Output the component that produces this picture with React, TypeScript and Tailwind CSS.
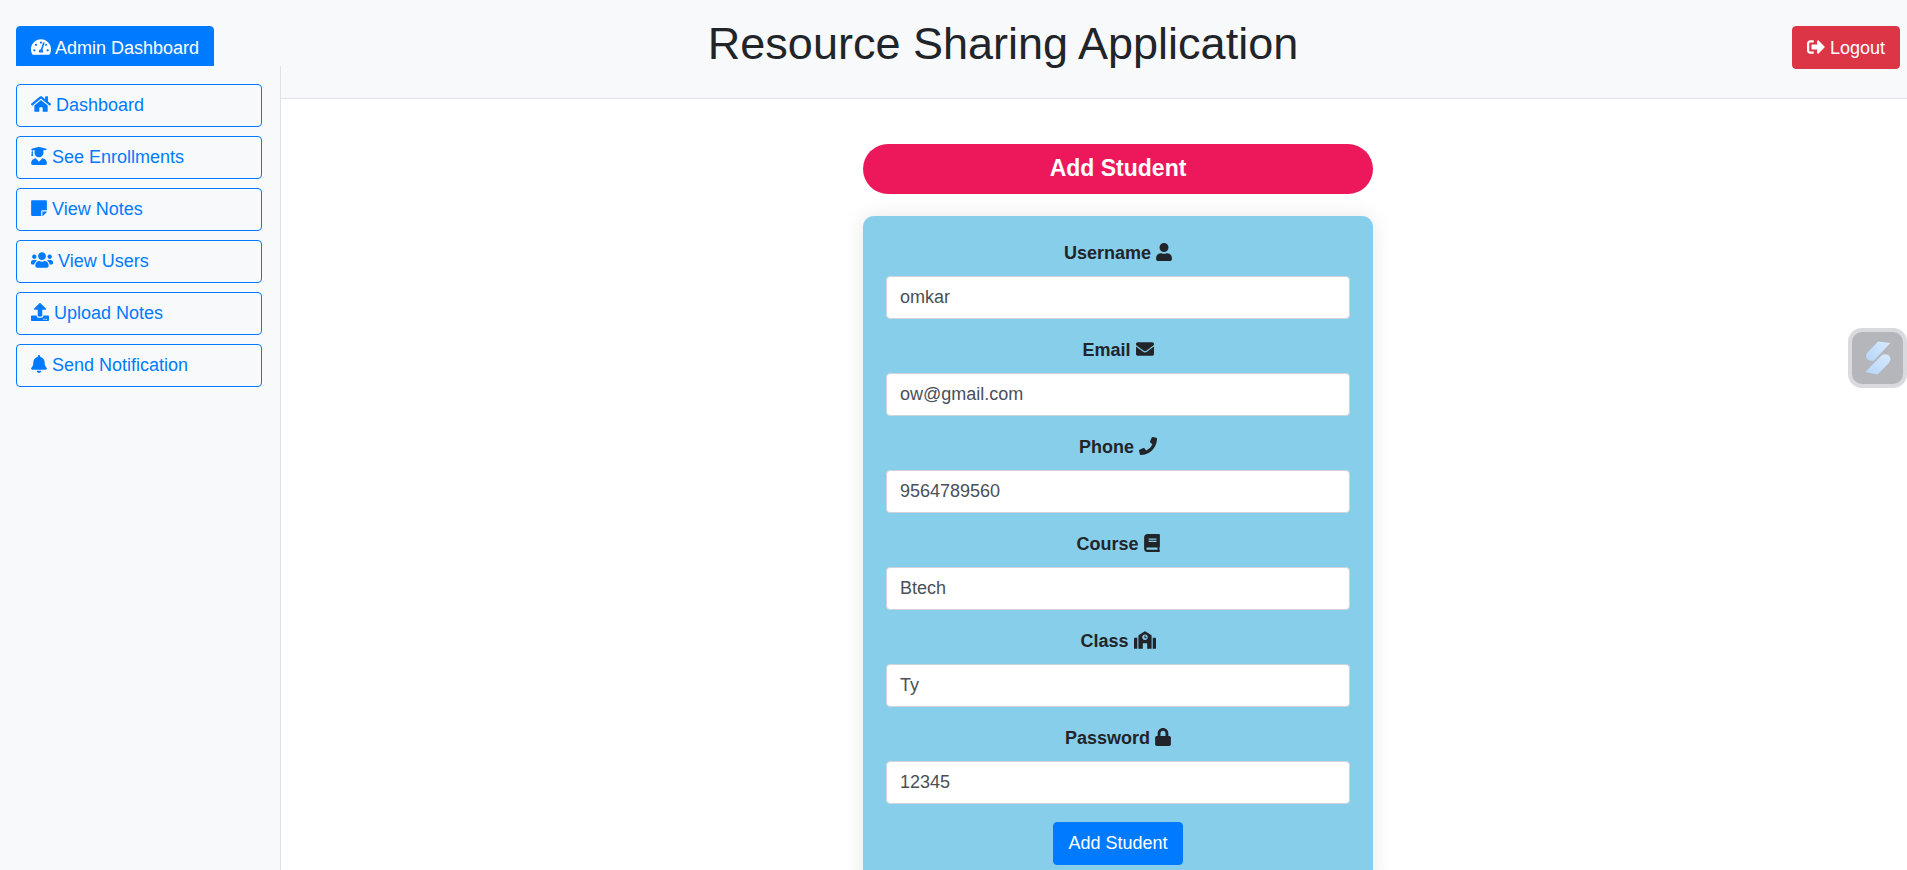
import React from 'react';
import type { IconType } from 'react-icons';
import {
  FaBell,
  FaBook,
  FaEnvelope,
  FaHome,
  FaLock,
  FaPhone,
  FaSchool,
  FaSignOutAlt,
  FaStickyNote,
  FaTachometerAlt,
  FaUpload,
  FaUser,
  FaUserGraduate,
  FaUsers,
} from 'react-icons/fa';

// Icon boxes follow each glyph's own proportions at an 18px height.
const narrow = 'inline-block h-[18px] w-4 align-[-2px]';
const square = 'inline-block h-[18px] w-[18px] align-[-2px]';
const wide = 'inline-block h-[18px] w-5 align-[-2px]';
const extraWide = 'inline-block h-[18px] w-[22px] align-[-2px]';

const links: { label: string; icon: IconType; size: string }[] = [
  { label: 'Dashboard', icon: FaHome, size: wide },
  { label: 'See Enrollments', icon: FaUserGraduate, size: narrow },
  { label: 'View Notes', icon: FaStickyNote, size: narrow },
  { label: 'View Users', icon: FaUsers, size: extraWide },
  { label: 'Upload Notes', icon: FaUpload, size: square },
  { label: 'Send Notification', icon: FaBell, size: narrow },
];

const fields: {
  id: string;
  label: string;
  icon: IconType;
  size: string;
  value: string;
  type: string;
}[] = [
  { id: 'username', label: 'Username', icon: FaUser, size: narrow, value: 'omkar', type: 'text' },
  { id: 'email', label: 'Email', icon: FaEnvelope, size: square, value: 'ow@gmail.com', type: 'email' },
  { id: 'phone', label: 'Phone', icon: FaPhone, size: square, value: '9564789560', type: 'tel' },
  { id: 'course', label: 'Course', icon: FaBook, size: narrow, value: 'Btech', type: 'text' },
  { id: 'class', label: 'Class', icon: FaSchool, size: extraWide, value: 'Ty', type: 'text' },
  { id: 'password', label: 'Password', icon: FaLock, size: narrow, value: '12345', type: 'text' },
];

function Header() {
  return (
    <header className="flex items-center justify-between border-b border-[#dee2e6] bg-[#f8f9fa] pt-[17px] pr-[7px] pb-5 pl-4">
      <a
        href="#admin"
        className="rounded-[4px] border border-[#007bff] bg-[#007bff] px-3.5 pt-2 pb-1.5 text-white"
      >
        <FaTachometerAlt className={wide} /> Admin Dashboard
      </a>
      <h1 className="mb-[7px] text-[45px] leading-[54px] font-normal">Resource Sharing Application</h1>
      <button
        type="button"
        className="rounded-[4px] border border-[#dc3545] bg-[#dc3545] px-3.5 pt-2 pb-1.5 text-white"
      >
        <FaSignOutAlt className={square} /> Logout
      </button>
    </header>
  );
}

function Sidebar() {
  return (
    <aside className="relative z-10 -mt-[33px] w-[281px] shrink-0 border-r border-[#dee2e6] bg-[#f8f9fa] pt-[18px] pr-[18px] pl-4">
      <nav className="flex flex-col gap-[9px]">
        {links.map(({ label, icon: Icon, size }) => (
          <a
            key={label}
            href="#"
            className="rounded-[4px] border border-[#007bff] px-3.5 py-[7px] text-[#007bff]"
          >
            <Icon className={size} /> {label}
          </a>
        ))}
      </nav>
    </aside>
  );
}

function StudentForm() {
  return (
    <form
      className="mt-[22px] rounded-[11px] bg-[#87ceeb] px-[23px] py-6 text-center shadow-[0_0_20px_rgba(0,0,0,0.1)]"
      onSubmit={(e) => e.preventDefault()}
    >
      {fields.map(({ id, label, icon: Icon, size, value, type }) => (
        <div key={id} className="mb-[18px]">
          <label htmlFor={id} className="mb-[9px] block font-bold">
            {label} <Icon className={size} />
          </label>
          <input
            id={id}
            type={type}
            defaultValue={value}
            className="block w-full rounded-[4px] border border-[#ced4da] bg-white px-[13px] py-[7px] text-[#495057]"
          />
        </div>
      ))}
      <button
        type="submit"
        className="rounded-[4px] border border-[#007bff] bg-[#007bff] px-3.5 py-[7px] text-white"
      >
        Add Student
      </button>
    </form>
  );
}

function FloatingWidget() {
  return (
    <button
      type="button"
      aria-label="Open assistant"
      className="fixed top-[328px] right-0 z-20 flex h-[60px] w-[59px] items-center justify-center rounded-[14px] border-4 border-[#d9dade] bg-[#b4b6bb]"
    >
      <svg viewBox="0 0 26 34" className="h-[34px] w-[26px]">
        <defs>
          <linearGradient id="blade" x1="0" y1="1" x2="1" y2="0">
            <stop offset="0" stopColor="#b5d6fa" />
            <stop offset="1" stopColor="#d8eafd" />
          </linearGradient>
        </defs>
        <path
          d="M13.2 0.5 L25.3 2 L9 19.5 Q5 20.5 2.500 18.500 Q-0.500 15 2.500 11.500 Z"
          fill="url(#blade)"
        />
        <path
          d="M12.700 33.500 L0.300 31 L16.500 14.500 Q19 12.500 23 13.800 Q27.500 17 24 21.800 Z"
          fill="url(#blade)"
        />
      </svg>
    </button>
  );
}

export default function App() {
  return (
    <div className="flex h-screen flex-col overflow-hidden bg-white font-['Liberation_Sans',Arial,sans-serif] text-[18px] leading-[27px] text-[#212529]">
      <Header />
      <div className="flex min-h-0 flex-1">
        <Sidebar />
        <main className="min-w-0 flex-1 overflow-y-auto pt-[45px] pb-6 pl-12 [scrollbar-width:none]">
          <div className="mx-auto max-w-[510px]">
            <h2 className="rounded-full bg-[#ed185b] pt-[11px] pb-3 text-center text-[23px] leading-[27px] font-bold text-white">
              Add Student
            </h2>
            <StudentForm />
          </div>
        </main>
      </div>
      <FloatingWidget />
    </div>
  );
}
